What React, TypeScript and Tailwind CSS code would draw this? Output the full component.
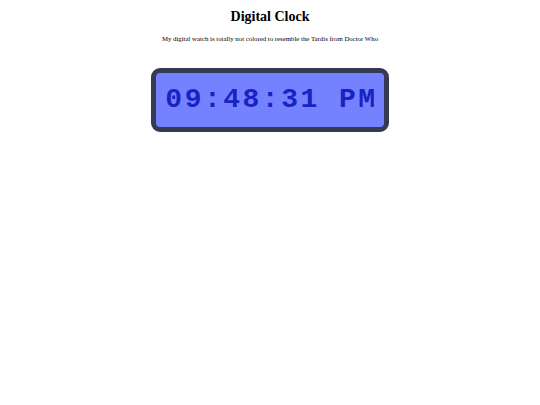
export default function App() {
  return (
    <div className="flex flex-col items-center bg-white min-h-[405px] font-['Liberation_Serif',serif] text-black">
      <h1 className="mt-[9px] text-[14px] font-bold leading-[16px]">Digital Clock</h1>
      <p className="mt-[10px] text-[6.8px] leading-[8px]">
        My digital watch is totally not colored to resemble the Tardis from Doctor Who
      </p>
      {/* clock face */}
      <div className="mt-[25px] w-[238px] h-[64px] rounded-[9px] border-[5px] border-[#363a54] bg-[#7582ff] flex items-center justify-center pl-[3px]">
        <span className="font-['Liberation_Mono',monospace] font-bold text-[28px] tracking-[2.5px] leading-none text-[#1a22c4]">
          09:48:31 PM
        </span>
      </div>
    </div>
  );
}
